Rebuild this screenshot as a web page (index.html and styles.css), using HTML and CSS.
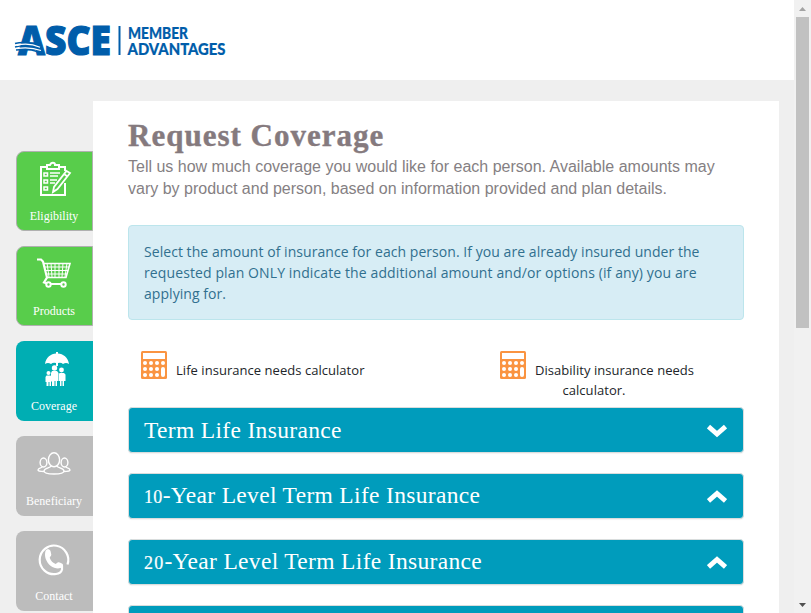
FILE: index.html
```html
<!DOCTYPE html>
<html lang="en">
<head>
<meta charset="utf-8">
<title>Request Coverage</title>
<link rel="stylesheet" href="styles.css">
</head>
<body>
<div class="page">
  <header class="header">
    <svg class="logo" viewBox="0 0 240 80" role="img" aria-label="ASCE Member Advantages">
      <text class="logo-main" x="18" y="54.500" textLength="93" lengthAdjust="spacingAndGlyphs">ASCE</text>
      <path class="waves-blue" d="M15 43.500c7-2 17-1 22 1M15 47c8-2 17-1 23 1M16 50c9-1 17 0 23 2"/>
      <path class="waves" d="M17 45.300c8-2 16-1 23 2M17 48.500c9-1.500 17-.5 24 2"/>
      <path class="rule" d="M119.500 26v29"/>
      <text class="logo-sub" x="128" y="38.700" textLength="60" lengthAdjust="spacingAndGlyphs">MEMBER</text>
      <text class="logo-sub" x="127.500" y="54.700" textLength="98" lengthAdjust="spacingAndGlyphs">ADVANTAGES</text>
    </svg>
  </header>
  <div class="body">
    <nav class="tabs">
      <a class="tab done">
        <svg viewBox="0 0 36 36"><g fill="none" stroke="#fff" stroke-width="2"><path d="M10 6H5v28h24V22M29 10V6h-5M11 8h12V4h-4c0-3-4-3-5 0h-3z"/><path d="M8 12h3.500v3H8zM8 19h3.500v3H8zM8 26h3.500v3H8z" stroke-width="1.500"/><path d="M14 12h10M14 15h8M14 19h7M14 22h5" stroke-width="1.500"/><path d="M30.500 10l3.500 2-12.500 16-4.500 3 1-5zM28 13l3.500 2.500" stroke-width="1.800"/></g></svg>
        <span>Eligibility</span>
      </a>
      <a class="tab done">
        <svg viewBox="0 0 36 36"><g fill="none" stroke="#fff"><path d="M1 3.500h4l2 2 4 16-3 5 4 1.500h18" stroke-width="2.200"/><path d="M7 7.500h27l-4 14H11" stroke-width="1.600"/><path d="M8 11h25M9 14.500h23M10 18h21M11 7l2 14M15 7l1 14M19 7v14M23 7v14M27 7l-1 14M31 7l-2 14" stroke-width="1"/><g fill="#58cd4b" stroke-width="2"><circle cx="12.500" cy="28.500" r="2.200"/><circle cx="27.500" cy="28.500" r="2.200"/></g></g></svg>
        <span>Products</span>
      </a>
      <a class="tab current">
        <svg viewBox="0 0 36 36"><g fill="#fff"><path d="M9 13C10 6 15 3 20 2.500V1h2v1.500C27 3 32 6 33 13q-3-2-6 0-2-2-5-1v3h-2v-3q-3-1-5 1-3-2-6 0z"/><circle cx="18.500" cy="17" r="2.700"/><circle cx="12.500" cy="22" r="2"/><circle cx="25.500" cy="19" r="2.400"/><path d="M16 20h5l1.500 2v8H21v5h-1.500v-5h-1v5H16v-5h-1v-8zM10.500 24.500h4l1 1.500v5H15v4h-1.500v-4h-1v4h-2v-4h-1v-5zM23.500 22h4.500l1.500 1.500V30H28v5h-1.500v-5h-1v5H24v-5h-1v-7z"/></g></svg>
        <span>Coverage</span>
      </a>
      <a class="tab">
        <svg viewBox="0 0 36 36"><g fill="none" stroke="#fff" stroke-width="1.400"><ellipse cx="18" cy="13.800" rx="5.600" ry="7"/><ellipse cx="7.500" cy="16.500" rx="3.400" ry="4.500"/><ellipse cx="28.500" cy="16.500" rx="3.400" ry="4.500"/><path d="M15 20c0 2-7 2-7 5 0 4 20 4 20 0 0-3-7-3-7-5M6 21c0 1-4 1-4 3 0 1 3 1.500 6 1.500M30 21c0 1 4 1 4 3 0 1-3 1.500-6 1.500"/></g></svg>
        <span>Beneficiary</span>
      </a>
      <a class="tab">
        <svg viewBox="0 0 36 36"><path d="M26 25v3.500q-1 4-6 4.500A14.300 14.300 0 1 1 31.500 23.500" fill="none" stroke="#fff" stroke-width="2.200"/><path d="M9.500 10c1-2.500 4-2.500 5 0l.8 3.500c0 2-1.800 2-1.500 3.500 1 3 3 5 6 6 2-2 3-2 5-1 2.500 1 3 2 1.500 4-3 2.500-8 1.500-11.500-1C10 21 8 15 9.500 10z" fill="#fff"/></svg>
        <span>Contact</span>
      </a>
    </nav>
    <main class="panel">
      <h1>Request Coverage</h1>
      <p class="intro">Tell us how much coverage you would like for each person. Available amounts may<br>vary by product and person, based on information provided and plan details.</p>
      <div class="notice">Select the amount of insurance for each person. If you are already insured under the<br><span class="wide">requested plan ONLY indicate the additional amount and/or options (if any) you are</span><br>applying for.</div>
      <div class="calculators">
        <a class="calc">
          <svg viewBox="0 0 26 28"><rect width="26" height="28" rx="1.500" fill="#fa9441"/><path d="M2 2h22v6H2z" fill="#fff"/><g fill="#fff"><circle cx="4" cy="12" r="2"/><circle cx="10" cy="12" r="2"/><circle cx="16" cy="12" r="2"/><circle cx="22" cy="12" r="2"/><circle cx="4" cy="18" r="2"/><circle cx="10" cy="18" r="2"/><circle cx="16" cy="18" r="2"/><circle cx="4" cy="24" r="2"/><circle cx="10" cy="24" r="2"/><circle cx="16" cy="24" r="2"/><rect x="20" y="16" width="4" height="10" rx="2"/></g></svg>
          <span>Life insurance needs calculator</span>
        </a>
        <a class="calc">
          <svg viewBox="0 0 26 28"><rect width="26" height="28" rx="1.500" fill="#fa9441"/><path d="M2 2h22v6H2z" fill="#fff"/><g fill="#fff"><circle cx="4" cy="12" r="2"/><circle cx="10" cy="12" r="2"/><circle cx="16" cy="12" r="2"/><circle cx="22" cy="12" r="2"/><circle cx="4" cy="18" r="2"/><circle cx="10" cy="18" r="2"/><circle cx="16" cy="18" r="2"/><circle cx="4" cy="24" r="2"/><circle cx="10" cy="24" r="2"/><circle cx="16" cy="24" r="2"/><rect x="20" y="16" width="4" height="10" rx="2"/></g></svg>
          <span>Disability insurance needs<span class="second">calculator.</span></span>
        </a>
      </div>
      <section class="bar"><h2>Term Life Insurance</h2><svg viewBox="0 0 20 14"><path d="M1.500 2.500L10 10l8.500-7.500"/></svg></section>
      <section class="bar"><h2><span class="num">10</span>-Year Level Term Life Insurance</h2><svg viewBox="0 0 20 14"><path d="M1.500 11L10 3.500l8.500 7.500"/></svg></section>
      <section class="bar"><h2><span class="num two">20</span>-Year Level Term Life Insurance</h2><svg viewBox="0 0 20 14"><path d="M1.500 11L10 3.500l8.500 7.500"/></svg></section>
      <section class="bar"></section>
    </main>
  </div>
</div>
<div class="scrollbar">
  <svg viewBox="0 0 17 17"><path d="M5 11l3.500-4 3.500 4z" fill="#a3a3a3"/></svg>
  <div class="thumb"></div>
  <svg viewBox="0 0 17 17"><path d="M5 7l3.500 4L12 7z" fill="#505050"/></svg>
</div>
</body>
</html>
```
FILE: styles.css
```css
* { box-sizing: border-box; }
body {
  margin: 0;
  height: 613px;
  display: flex;
  overflow: hidden;
  background: #efefef;
  font-family: "Open Sans", sans-serif;
}
.page { width: 794px; height: 613px; overflow: hidden; }
.header { height: 80px; background: #fff; }
.logo { display: block; width: 240px; height: 80px; overflow: visible; }
.logo text { fill: #005daa; stroke: #005daa; }
.logo-main { font: 800 41px "Open Sans", sans-serif; stroke-width: 1.200px; }
.logo-sub { font: 900 16.5px Lato, sans-serif; stroke-width: .2px; }
.waves { fill: none; stroke: #fff; stroke-width: 1.200; }
.waves-blue { fill: none; stroke: #005daa; stroke-width: 1.500; }
.rule { stroke: #005daa; stroke-width: 2; }
.body { display: flex; padding: 21px 15px 0 16px; }
.tabs { width: 77px; flex: none; padding-top: 50px; display: flex; flex-direction: column; gap: 15px; }
.tab {
  height: 80px;
  flex: none;
  display: flex;
  flex-direction: column;
  align-items: center;
  padding: 10px 1px 0 0;
  border-radius: 8px 0 0 8px;
  background: #bcbcbc;
  color: #fff;
  font: 12px/16px "Liberation Serif", serif;
}
.tab.done { background: #58cd4b; border: 1px solid #b0b0b0; padding-top: 9px; }
.tab.current { background: #00aeb3; }
.tab svg { width: 36px; height: 36px; margin-bottom: 11px; }
.panel { width: 686px; height: 540px; background: #fff; padding: 20px 35px 0; }
h1 {
  margin: 0;
  height: 35px;
  color: #857a7e;
  font: bold 31px/30px "Liberation Serif", serif;
  letter-spacing: 1px;
  -webkit-text-stroke: .4px #857a7e;
  white-space: nowrap;
}
.intro {
  margin: 0;
  height: 44px;
  color: #857f83;
  font: 16px/22px "Liberation Sans", sans-serif;
  white-space: nowrap;
}
.notice {
  margin-top: 25px;
  height: 95px;
  padding: 15px 15px;
  border: 1px solid #bce5ec;
  border-radius: 4px;
  background: #d7edf5;
  color: #31708f;
  font-size: 14px;
  line-height: 21px;
  letter-spacing: .050px;
  white-space: nowrap;
}
.wide { letter-spacing: .110px; }
.calculators { display: flex; height: 87px; padding: 31px 0 0 13px; }
.calc { display: flex; align-items: flex-start; gap: 9px; color: #212529; font-size: 13px; line-height: 20px; letter-spacing: .040px; white-space: nowrap; }
.calc:first-child { width: 359px; }
.calc svg { width: 26px; height: 28px; flex: none; }
.calc > span { padding-top: 9px; }
.second { display: block; text-align: center; margin-left: -41px; }
.bar {
  height: 46px;
  margin-bottom: 20px;
  padding: 0 16px 0 15px;
  display: flex;
  align-items: center;
  justify-content: space-between;
  border: 1px solid #d9dddd;
  border-radius: 4px;
  background: #009cbc;
  box-shadow: 0 1px 1px rgba(0, 0, 0, .05);
}
.bar h2 { margin: 0; color: #fff; font: 23.5px/44px "Liberation Serif", serif; letter-spacing: .330px; white-space: nowrap; }
.num { font-size: 18px; -webkit-text-stroke: .2px #fff; }
.two { letter-spacing: 1.200px; }
.bar svg { width: 20px; height: 14px; fill: none; stroke: #fff; stroke-width: 4.800; margin-top: 2px; }
.scrollbar { width: 17px; height: 613px; flex: none; background: #f1f1f1; display: flex; flex-direction: column; align-items: center; }
.scrollbar svg { width: 17px; height: 17px; flex: none; }
.thumb { width: 13px; height: 311px; background: #c1c1c1; margin-bottom: auto; }
```
